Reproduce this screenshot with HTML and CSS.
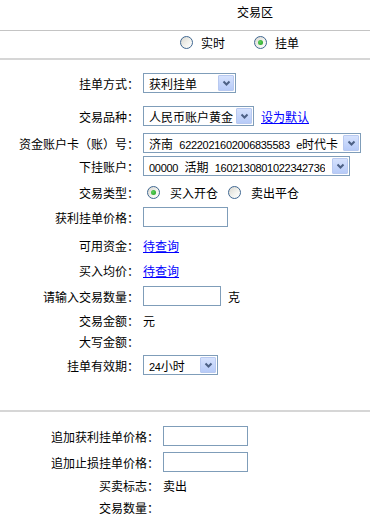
FILE: index.html
```html
<!DOCTYPE html>
<html lang="zh-CN">
<head>
  <meta charset="UTF-8">
  <title>交易区</title>
  <link rel="stylesheet" href="styles.css">
</head>
<body>

  <!-- Header -->
  <div class="title">交易区</div>
  <div class="mode">
    <span class="opt"><span class="radio"></span>实时</span>
    <span class="opt"><span class="radio checked"></span>挂单</span>
  </div>

  <!-- Order form -->
  <div class="form">
    <div class="row">
      <span class="label">挂单方式：</span>
      <span class="select w-mode"><span class="val">获利挂单</span><span class="btn"><svg width="9" height="6" viewBox="0 0 9 6"><polyline points="1.5,1.5 4.5,4.5 7.5,1.5" fill="none" stroke="#4d6185" stroke-width="2"/></svg></span></span>
    </div>
    <div class="row">
      <span class="label">交易品种：</span>
      <span class="select w-kind"><span class="val">人民币账户黄金</span><span class="btn"><svg width="9" height="6" viewBox="0 0 9 6"><polyline points="1.5,1.5 4.5,4.5 7.5,1.5" fill="none" stroke="#4d6185" stroke-width="2"/></svg></span></span>
      <a href="#" class="link after">设为默认</a>
    </div>
    <div class="row">
      <span class="label">资金账户卡（账）号：</span>
      <span class="select w-card"><span class="val">济南 <span class="num">6222021602006835583</span> <span class="num">e</span>时代卡</span><span class="btn"><svg width="9" height="6" viewBox="0 0 9 6"><polyline points="1.5,1.5 4.5,4.5 7.5,1.5" fill="none" stroke="#4d6185" stroke-width="2"/></svg></span></span>
    </div>
    <div class="row">
      <span class="label">下挂账户：</span>
      <span class="select w-acct"><span class="val"><span class="num">00000</span> 活期 <span class="num">1602130801022342736</span></span><span class="btn"><svg width="9" height="6" viewBox="0 0 9 6"><polyline points="1.5,1.5 4.5,4.5 7.5,1.5" fill="none" stroke="#4d6185" stroke-width="2"/></svg></span></span>
    </div>
    <div class="row">
      <span class="label">交易类型：</span>
      <span class="value radios">
        <span class="opt"><span class="radio checked"></span>买入开仓</span>
        <span class="opt"><span class="radio"></span>卖出平仓</span>
      </span>
    </div>
    <div class="row">
      <span class="label">获利挂单价格：</span>
      <span class="input w-price"></span>
    </div>
    <div class="row">
      <span class="label">可用资金：</span>
      <a href="#" class="link value">待查询</a>
    </div>
    <div class="row">
      <span class="label">买入均价：</span>
      <a href="#" class="link value">待查询</a>
    </div>
    <div class="row">
      <span class="label">请输入交易数量：</span>
      <span class="input w-qty"></span>
      <span class="after">克</span>
    </div>
    <div class="row">
      <span class="label">交易金额：</span>
      <span class="value">元</span>
    </div>
    <div class="row">
      <span class="label">大写金额：</span>
    </div>
    <div class="row">
      <span class="label">挂单有效期：</span>
      <span class="select w-term"><span class="val"><span class="num">24</span>小时</span><span class="btn"><svg width="9" height="6" viewBox="0 0 9 6"><polyline points="1.5,1.5 4.5,4.5 7.5,1.5" fill="none" stroke="#4d6185" stroke-width="2"/></svg></span></span>
    </div>
  </div>

  <!-- Additional orders -->
  <div class="form extra">
    <div class="row">
      <span class="label">追加获利挂单价格：</span>
      <span class="input w-price"></span>
    </div>
    <div class="row">
      <span class="label">追加止损挂单价格：</span>
      <span class="input w-price"></span>
    </div>
    <div class="row">
      <span class="label">买卖标志：</span>
      <span class="value">卖出</span>
    </div>
    <div class="row">
      <span class="label">交易数量：</span>
    </div>
  </div>

</body>
</html>
```

FILE: styles.css
```css
/* Reset */
* {
  margin: 0;
  padding: 0;
  box-sizing: border-box;
}

body {
  font-family: "Liberation Sans", "Noto Sans CJK SC", sans-serif;
  font-size: 12px;
  color: #000;
  background: #fff;
  width: 370px;
  overflow: hidden;
}

/* Header */
.title {
  height: 31px;
  line-height: 27px;
  padding-left: 237px;
  border-bottom: 1px solid #c4c4c4;
}

.mode {
  display: flex;
  align-items: center;
  height: 29px;
  padding: 0 0 5px 180px;
  border-bottom: 2px solid #d6d6d6;
}

.opt {
  display: flex;
  align-items: center;
  gap: 8px;
}

.mode .opt + .opt {
  margin-left: 29px;
}

/* Radio buttons */
.radio {
  position: relative;
  width: 13px;
  height: 13px;
  border-radius: 50%;
  border: 1px solid #3f6791;
  background: linear-gradient(135deg, #d9d8d1, #f4f4f0 60%, #fff);
}

.radio.checked::after {
  content: '';
  position: absolute;
  top: 3px;
  left: 3px;
  width: 5px;
  height: 5px;
  border-radius: 50%;
  background: radial-gradient(circle at 40% 40%, #5fd35f, #1d9c1d);
}

/* Form rows */
.form {
  padding-top: 13px;
}

.row {
  display: flex;
  align-items: center;
  height: 20px;
}

.label {
  width: 139px;
  text-align: right;
  margin-right: 4px;
  flex-shrink: 0;
}

.form .row:nth-child(2) { margin-top: 13px; }
.form .row:nth-child(3) { margin-top: 7px; }
.form .row:nth-child(4) { margin-top: 3px; }
.form .row:nth-child(5) { margin-top: 6px; }
.form .row:nth-child(6) { margin-top: 5px; }
.form .row:nth-child(7) { margin-top: 8px; }
.form .row:nth-child(8) { margin-top: 5px; }
.form .row:nth-child(9) { margin-top: 6px; }
.form .row:nth-child(10) { margin-top: 4px; }
.form .row:nth-child(11) { margin-top: 1px; }
.form .row:nth-child(12) { margin-top: 4px; }

/* Lower block */
.extra {
  margin-top: 35px;
  padding-top: 14px;
  border-top: 2px solid #d6d6d6;
}

.extra .label {
  width: 159px;
}

.extra .row:nth-child(2) { margin-top: 6px; }
.extra .row:nth-child(3) { margin-top: 3px; }
.extra .row:nth-child(4) { margin-top: 2px; }

/* Controls */
.select {
  display: flex;
  align-items: center;
  justify-content: space-between;
  height: 20px;
  border: 1px solid #7f9db9;
  background: #fff;
  padding: 1px;
}

.select .val {
  padding-left: 4px;
  white-space: nowrap;
  overflow: hidden;
  word-spacing: 3px;
}

.select .btn {
  display: flex;
  align-items: center;
  justify-content: center;
  width: 16px;
  height: 16px;
  flex-shrink: 0;
  border: 1px solid #b8c9f0;
  border-radius: 1px;
  background: linear-gradient(180deg, #d6e2fd, #b7cbf8);
}

.num {
  font-size: 11px;
  letter-spacing: -0.3px;
}

.w-mode { width: 93px; }
.w-kind { width: 111px; }
.w-card { width: 218px; }
.w-acct { width: 207px; }
.w-term { width: 75px; }

.input {
  height: 20px;
  border: 1px solid #7f9db9;
  background: #fff;
}

.w-price { width: 85px; }
.w-qty { width: 78px; }

.radios {
  display: flex;
  align-items: center;
  padding-left: 4px;
}

.radios .opt {
  gap: 10px;
}

.radios .opt + .opt {
  margin-left: 10px;
}

.link {
  color: #0000ff;
  text-decoration: underline;
}

.after {
  margin-left: 7px;
}
```
